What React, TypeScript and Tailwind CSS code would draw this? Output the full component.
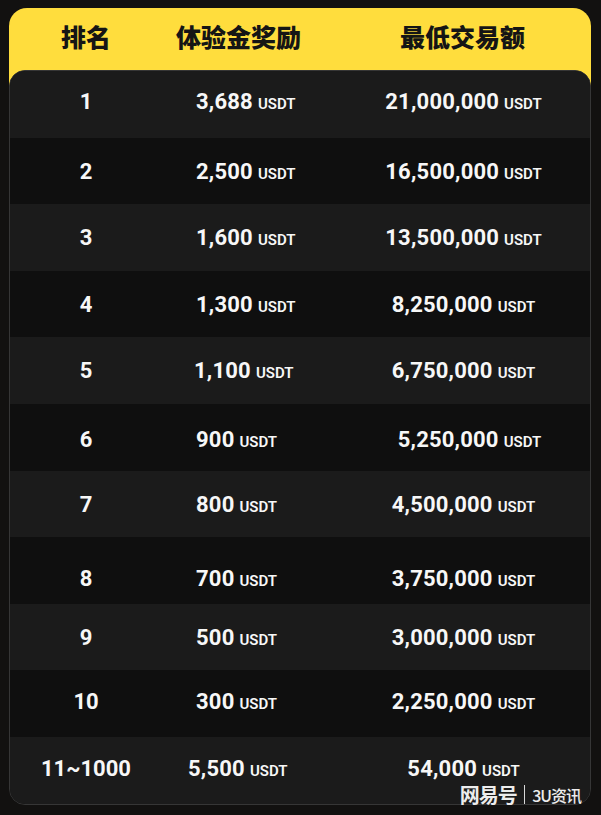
import React from 'react';

type Row = {
  rank: string;
  reward: string;
  volume: string;
  shift?: string;
  rewardShift?: string;
  volumeShift?: string;
};

const rows: Row[] = [
  { rank: '1', reward: '3,688', volume: '21,000,000', shift: '-translate-y-[3px]' },
  { rank: '2', reward: '2,500', volume: '16,500,000', shift: 'translate-y-[1px]' },
  { rank: '3', reward: '1,600', volume: '13,500,000' },
  { rank: '4', reward: '1,300', volume: '8,250,000' },
  { rank: '5', reward: '1,100', volume: '6,750,000', rewardShift: '-translate-x-[2px]' },
  { rank: '6', reward: '900', volume: '5,250,000', shift: 'translate-y-[2px]', volumeShift: 'translate-x-[6px]' },
  { rank: '7', reward: '800', volume: '4,500,000', shift: 'translate-y-[1px]' },
  { rank: '8', reward: '700', volume: '3,750,000', shift: 'translate-y-[8px]' },
  { rank: '9', reward: '500', volume: '3,000,000' },
  { rank: '10', reward: '300', volume: '2,250,000', shift: '-translate-y-[2px]' },
  { rank: '11~1000', reward: '5,500', volume: '54,000', shift: '-translate-y-[2px]', rewardShift: '-translate-x-[8px]' },
];

const Amount = ({ value }: { value: string }) => (
  <span className="inline-flex items-baseline">
    <span className="text-[22px] font-bold tracking-[0.2px]">{value}</span>
    <span className="ml-[5px] text-[15px] font-semibold">USDT</span>
  </span>
);

export default function App() {
  return (
    <div
      className="w-[601px] h-[815px] bg-[#121110] pt-[8px] px-[9px] overflow-hidden"
      style={{ fontFamily: 'Roboto, "Noto Sans CJK SC", sans-serif' }}
    >
      <div className="relative w-[582px]">
        {/* Header */}
        <div
          className="h-[78px] pb-4 rounded-t-[18px] bg-[#ffdd3d] grid grid-cols-[154px_177px_1fr] items-center text-[#151515] text-[25px] font-black"
          style={{ fontFamily: '"Noto Sans CJK SC", sans-serif' }}
        >
          <div className="text-center -translate-y-[2px]">排名</div>
          <div className="pl-[13px] -translate-y-[2px]">体验金奖励</div>
          <div className="text-center pr-[6px] -translate-y-[2px]">最低交易额</div>
        </div>

        {/* Body */}
        <div className="-mt-4 rounded-[16px] border border-[#363636] overflow-hidden bg-[#111111]">
          {rows.map((row, i) => (
            <div
              key={row.rank}
              className={`h-[66.6px] grid grid-cols-[154px_177px_1fr] items-center text-[#f7f7f7] ${
                i % 2 === 0 ? 'bg-[#1b1b1b]' : 'bg-[#0f0f0f]'
              }`}
            >
              <div className={`text-center text-[22px] font-bold pr-[2px] ${row.shift ?? ''}`}>{row.rank}</div>
              <div className={`pl-[32px] ${row.shift ?? ''} ${row.rewardShift ?? ''}`}>
                <Amount value={row.reward} />
              </div>
              <div className={`text-center pr-[4px] ${row.shift ?? ''} ${row.volumeShift ?? ''}`}>
                <Amount value={row.volume} />
              </div>
            </div>
          ))}
        </div>

        {/* Watermark */}
        <div
          className="absolute right-[10px] bottom-0 flex items-center leading-none text-[#ececec]"
          style={{ fontFamily: '"Noto Sans CJK SC", sans-serif' }}
        >
          <span className="text-[20px] font-bold tracking-[-1px]">网易号</span>
          <span className="mx-[7px] h-[19px] w-[1.5px] bg-[#d8d8d8]" />
          <span className="text-[16px] font-medium tracking-[-1px]">3U资讯</span>
        </div>
      </div>
    </div>
  );
}
